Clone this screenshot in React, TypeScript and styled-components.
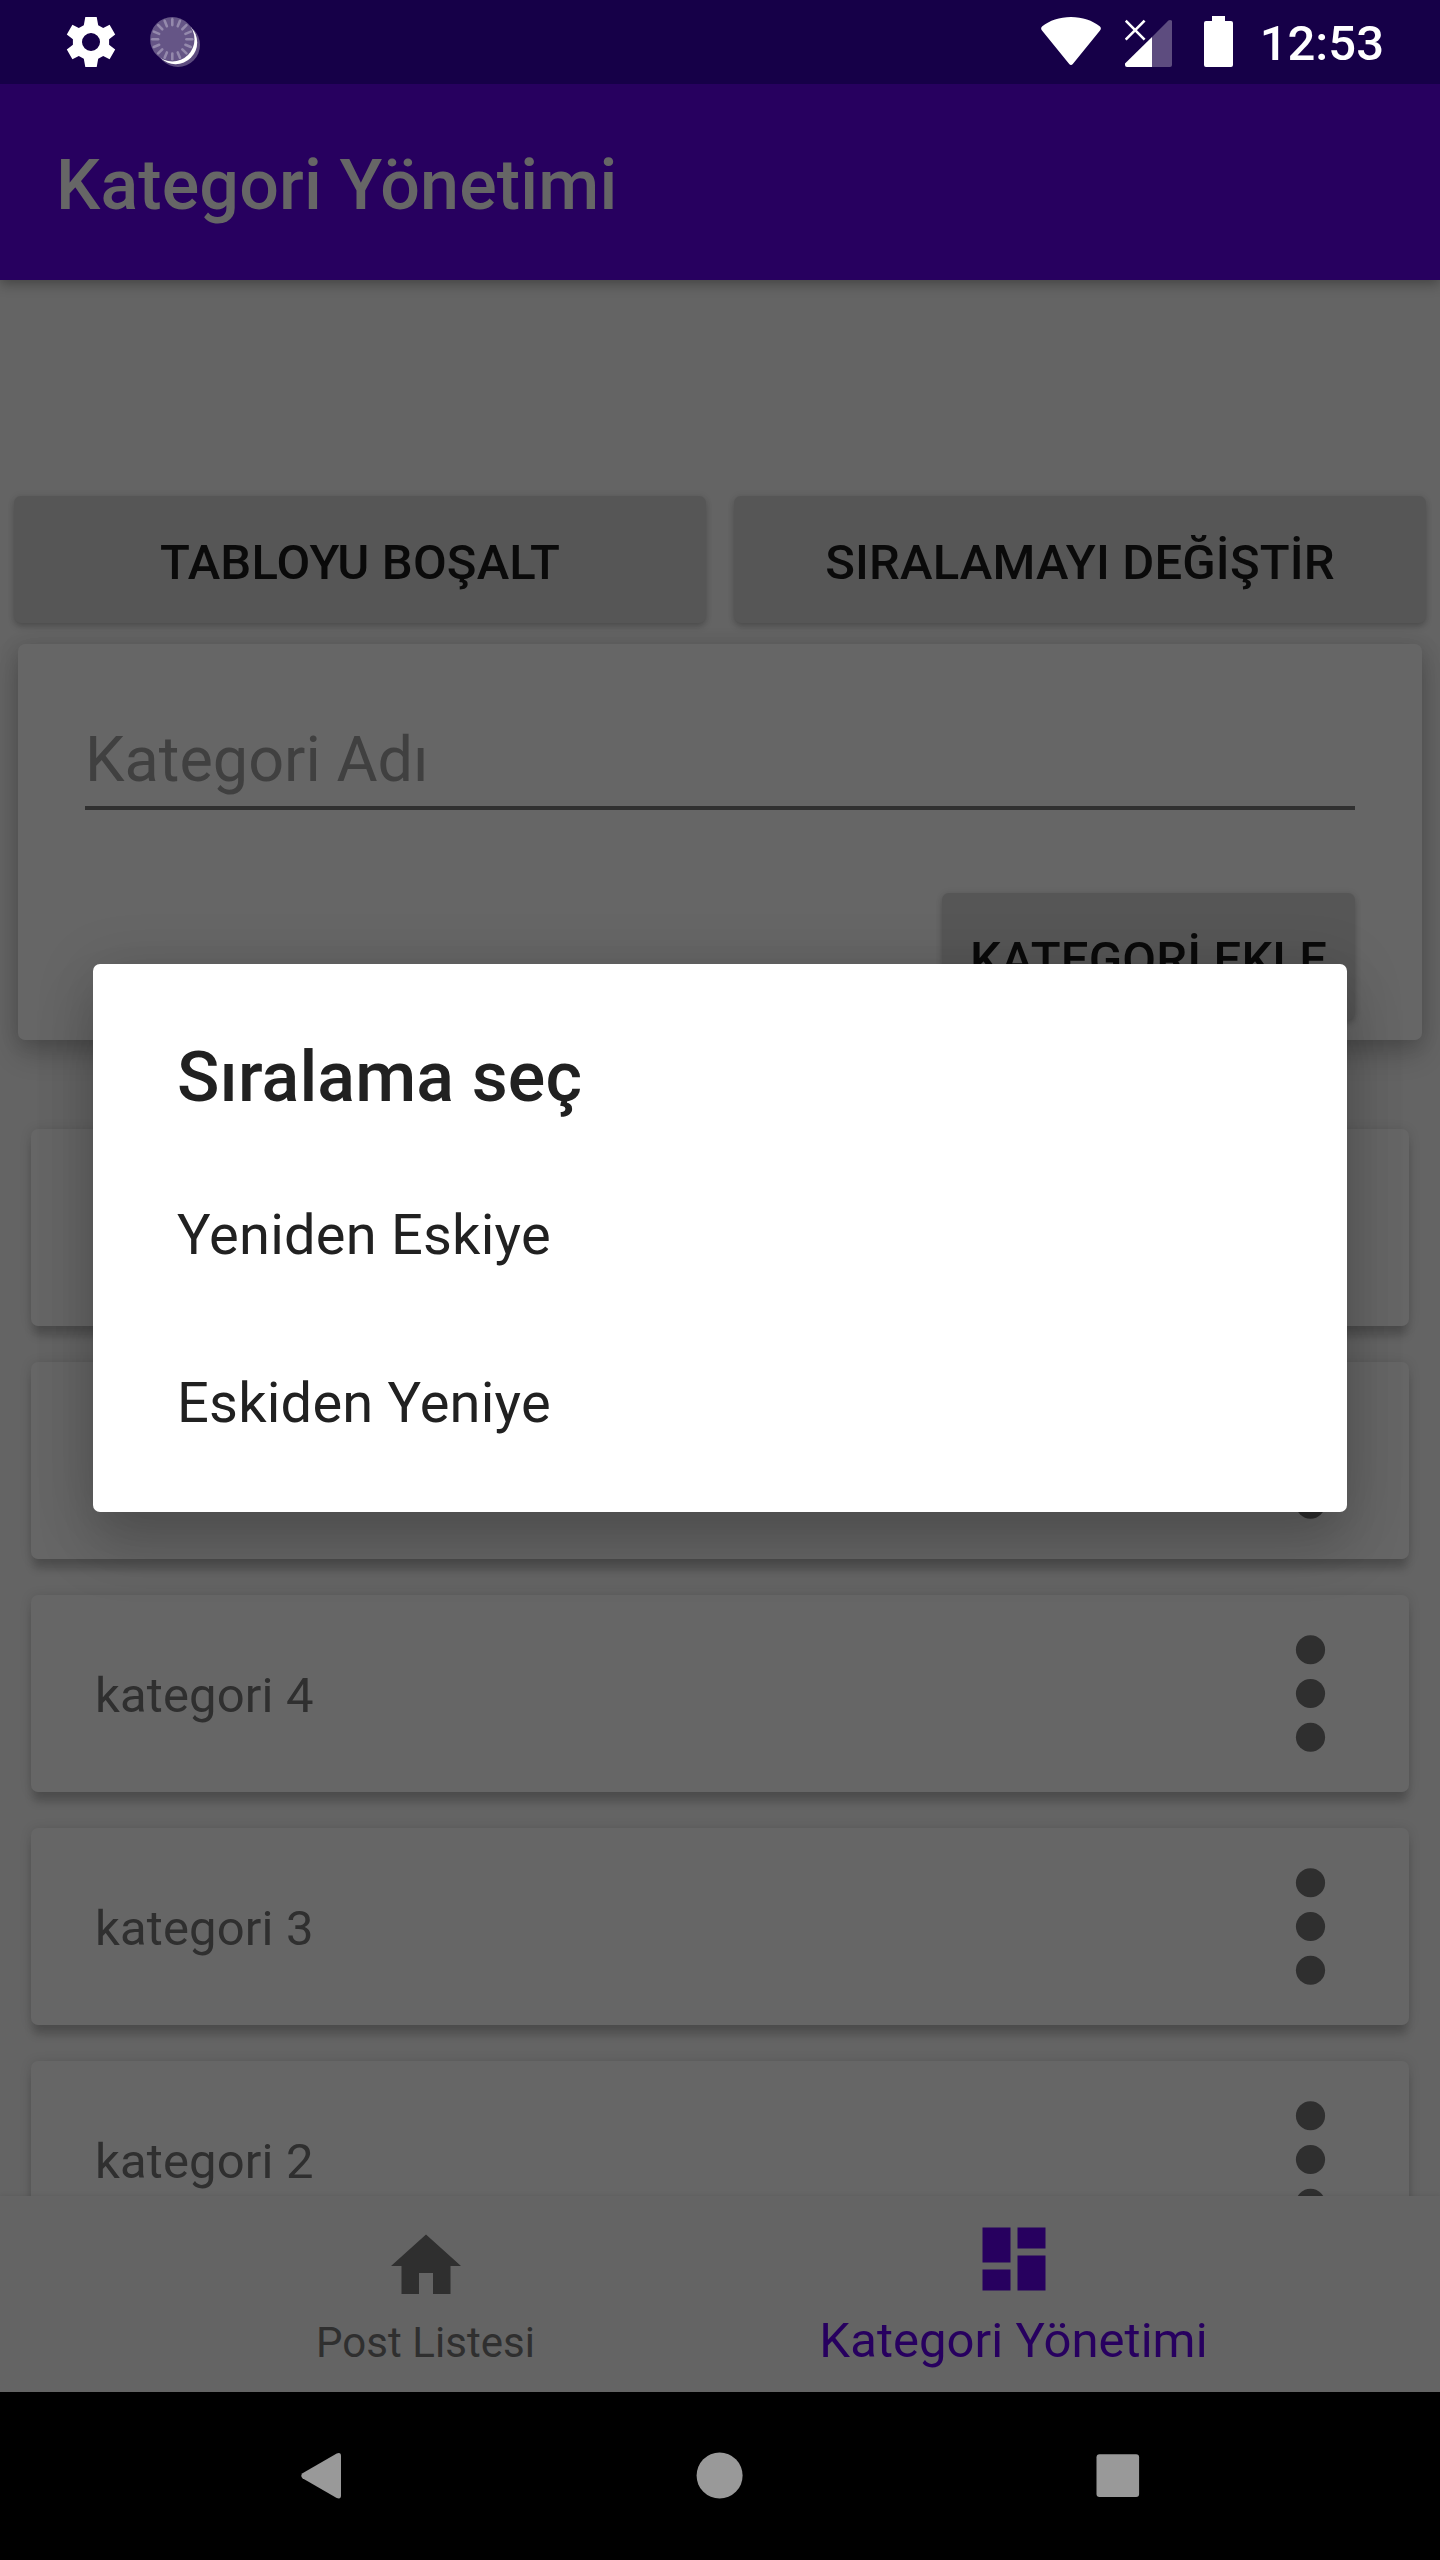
import React from "react";
import styled, { createGlobalStyle } from "styled-components";

const GlobalStyle = createGlobalStyle`
  *, *::before, *::after { box-sizing: border-box; }
  body {
    margin: 0;
    background: #000;
    font-family: Roboto, "Noto Sans", sans-serif;
  }
  button {
    border: 0;
    margin: 0;
    padding: 0;
    background: none;
    color: inherit;
    font: inherit;
  }
  svg { display: block; flex: none; }
`;

const Screen = styled.div`
  position: relative;
  width: 1440px;
  height: 2560px;
  display: flex;
  flex-direction: column;
  overflow: hidden;
  background: #646464;
`;

const StatusBar = styled.header`
  flex: none;
  height: 84px;
  padding: 0 56px 0 61px;
  display: flex;
  align-items: center;
  justify-content: space-between;
  background: #160048;
  position: relative;
  z-index: 2;
`;

const StatusGroup = styled.div<{ $gap: number }>`
  display: flex;
  align-items: center;
  gap: ${(p) => p.$gap}px;
`;

const Clock = styled.span`
  margin-left: -22px;
  padding-top: 4px;
  color: #fff;
  font-size: 49px;
  font-weight: 500;
  line-height: 58px;
`;

const AppBar = styled.div`
  flex: none;
  height: 196px;
  padding: 5px 56px 0;
  display: flex;
  align-items: center;
  background: #27005f;
  box-shadow: 0 4px 12px rgba(0, 0, 0, 0.32);
  position: relative;
  z-index: 1;
`;

const AppTitle = styled.h1`
  margin: 0;
  color: #666;
  font-size: 70px;
  font-weight: 500;
  line-height: 82px;
  letter-spacing: 0.15px;
`;

const Content = styled.main`
  flex: 1;
  min-height: 0;
  padding-top: 216px;
  display: flex;
  flex-direction: column;
  overflow: hidden;
`;

const ButtonRow = styled.div`
  flex: none;
  display: grid;
  grid-template-columns: 1fr 1fr;
  gap: 28px;
  padding: 0 14px;
`;

const RaisedButton = styled.button<{ $width?: number }>`
  width: ${(p) => (p.$width ? `${p.$width}px` : "100%")};
  height: 127px;
  padding-top: 6px;
  border-radius: 7px;
  background: #565656;
  color: #0a0a0a;
  font-size: 49px;
  font-weight: 500;
  line-height: 58px;
  letter-spacing: 0.17px;
  white-space: nowrap;
  box-shadow: 0 4px 7px -1px rgba(0, 0, 0, 0.22), 0 0 7px rgba(0, 0, 0, 0.09);
`;

const FormCard = styled.section`
  flex: none;
  height: 396px;
  margin: 21px 18px 0;
  padding: 79px 67px 0;
  display: flex;
  flex-direction: column;
  border-radius: 7px;
  background: #666;
  box-shadow: 0 14px 28px rgba(0, 0, 0, 0.2), 0 2px 20px rgba(0, 0, 0, 0.12);
`;

const Field = styled.div`
  height: 87px;
  border-bottom: 4px solid #303030;
  color: #404040;
  font-size: 63px;
  line-height: 74px;
`;

const FormActions = styled.div`
  display: flex;
  justify-content: flex-end;
  margin-top: 83px;
`;

const CategoryList = styled.div`
  display: flex;
  flex-direction: column;
  gap: 36px;
  margin-top: 89px;
  padding: 0 31px;
`;

const CategoryRow = styled.article`
  flex: none;
  height: 197px;
  padding: 0 11px 0 64px;
  display: flex;
  align-items: center;
  justify-content: space-between;
  border-radius: 7px;
  background: #666;
  box-shadow: 0 12px 8px -2px rgba(0, 0, 0, 0.18), 0 1px 12px rgba(0, 0, 0, 0.13);
`;

const CategoryName = styled.span`
  padding-top: 5px;
  color: #2f2f2f;
  font-size: 49px;
  line-height: 58px;
  letter-spacing: 0.15px;
`;

const BottomNav = styled.nav`
  flex: none;
  height: 196px;
  padding-right: 1px;
  display: flex;
  justify-content: center;
  background: #646464;
  box-shadow: 0 0 5px rgba(0, 0, 0, 0.1);
  position: relative;
`;

const NavItem = styled.button<{ $active?: boolean }>`
  width: 588px;
  padding: ${(p) => (p.$active ? "21px 0 22px" : "28px 0 24px")};
  display: flex;
  flex-direction: column;
  align-items: center;
  justify-content: space-between;
  color: ${(p) => (p.$active ? "#27005f" : "#2f2f2f")};
  font-size: ${(p) => (p.$active ? 49 : 42)}px;
  line-height: ${(p) => (p.$active ? 58 : 50)}px;
  letter-spacing: 0.06px;
`;

const SystemNav = styled.footer`
  flex: none;
  height: 168px;
  padding: 0 123px;
  display: grid;
  grid-template-columns: repeat(3, 1fr);
  place-items: center;
  background: #000;
`;

const Dialog = styled.div`
  position: absolute;
  z-index: 3;
  left: 93px;
  top: 964px;
  width: 1254px;
  height: 548px;
  border-radius: 7px;
  background: #fff;
  color: #212121;
  box-shadow: 0 36px 56px rgba(0, 0, 0, 0.17), 0 6px 60px rgba(0, 0, 0, 0.15);
`;

const DialogTitle = styled.h2`
  margin: 0;
  height: 187px;
  padding: 72px 84px 0;
  font-size: 70px;
  font-weight: 500;
  line-height: 82px;
  letter-spacing: 0.12px;
`;

const DialogOption = styled.button`
  width: 100%;
  height: 168px;
  padding: 0 84px;
  display: flex;
  align-items: center;
  font-size: 56px;
  line-height: 66px;
  letter-spacing: 0.22px;
`;

const GearIcon = () => (
  <svg width="60" height="60" viewBox="61 12 60 60" fill="#fff">
    <path
      fillRule="evenodd"
      d="M85.3 17h11.4l1.5 8.2 5 2.9 6.4-3.4 5.6 9.700-6.100 4.900v5.400l6.100 4.900-5.600 9.700-6.400-3.400-5 2.900-1.500 8.200H85.300l-1.500-8.200-5-2.900-6.400 3.400-5.600-9.700 6.100-4.900v-5.400l-6.100-4.900 5.600-9.700 6.400 3.400 5-2.900zM91 33a9 9 0 1 0 0 18a9 9 0 1 0 0-18z"
    />
  </svg>
);

const TICKS = Array.from({ length: 16 }, (_, i) => i * 22.5);

const DialIcon = () => (
  <svg width="54" height="60" viewBox="149 12 54 60">
    <circle cx="178" cy="45" r="22" fill="#5d4c7f" />
    <circle cx="175.6" cy="42.6" r="21.6" fill="#fff" />
    <circle cx="172.3" cy="39.3" r="22.2" fill="#655586" />
    {TICKS.map((angle) => (
      <path
        key={angle}
        d="M172.3 19.3v5.8"
        stroke="#9489ac"
        strokeWidth="2.6"
        strokeLinecap="round"
        transform={`rotate(${angle} 172.3 39.3)`}
      />
    ))}
  </svg>
);

const WifiIcon = () => (
  <svg width="60" height="60" viewBox="1040 12 60 60" fill="#fff">
    <path d="M1041 30.5C1039.8 29.2 1039.8 27.4 1041.3 26.3C1048.5 20.5 1058.5 17 1070 17S1091.5 20.5 1098.7 26.3C1100.2 27.4 1100.2 29.2 1099 30.5L1071.8 64.1C1070.8 65.3 1069.2 65.3 1068.2 64.1z" />
  </svg>
);

const SignalIcon = () => (
  <svg width="55" height="60" viewBox="1124 12 55 60">
    <path d="M1151 37L1167.4 20.6Q1169 19.3 1171 20.8V65Q1171 67 1169 67H1151z" fill="#5d4c7f" />
    <path d="M1151 37V67H1126Q1124 67 1124 65V63.5z" fill="#fff" />
    <path d="M1124.7 20.7L1143.6 39.6M1143.6 20.7L1124.7 39.6" stroke="#fff" strokeWidth="2.6" />
  </svg>
);

const BatteryIcon = () => (
  <svg width="54" height="60" viewBox="1203 12 54 60" fill="#fff">
    <path d="M1211 16h13v5h6q2 0 2 2v42q0 2-2 2h-25q-2 0-2-2V23q0-2 2-2h6z" />
  </svg>
);

const MoreIcon = () => (
  <svg width="175" height="175" viewBox="0 0 24 24" fill="#2f2f2f">
    <circle cx="12" cy="6" r="2" />
    <circle cx="12" cy="12" r="2" />
    <circle cx="12" cy="18" r="2" />
  </svg>
);

const HomeIcon = () => (
  <svg width="84" height="84" viewBox="0 0 24 24" fill="currentColor">
    <path d="M10 20v-6h4v6h5v-8h3L12 3 2 12h3v8z" />
  </svg>
);

const DashboardIcon = () => (
  <svg width="84" height="84" viewBox="0 0 24 24" fill="currentColor">
    <path d="M3 13h8V3H3v10zm0 8h8v-6H3v6zm10 0h8V11h-8v10zm0-18v6h8V3h-8z" />
  </svg>
);

const BackIcon = () => (
  <svg width="84" height="84" viewBox="280 2434 84 84" fill="#999">
    <path d="M302.5 2473.2L336.7 2453.5Q341 2451.8 341 2456V2495.5Q341 2499.7 336.7 2498L302.5 2478.3Q300 2475.8 302.5 2473.2z" />
  </svg>
);

const HomeCircleIcon = () => (
  <svg width="84" height="84" viewBox="0 0 84 84" fill="#999">
    <circle cx="41.6" cy="41.6" r="23" />
  </svg>
);

const RecentsIcon = () => (
  <svg width="84" height="84" viewBox="0 0 84 84" fill="#999">
    <rect x="20.5" y="20.3" width="42.6" height="42.6" rx="3" />
  </svg>
);

const categories = ["", "", "kategori 4", "kategori 3", "kategori 2"];
const sortOptions = ["Yeniden Eskiye", "Eskiden Yeniye"];

export default function App() {
  return (
    <>
      <GlobalStyle />
      <Screen lang="tr">
        <StatusBar>
          <StatusGroup $gap={28}>
            <GearIcon />
            <DialIcon />
          </StatusGroup>
          <StatusGroup $gap={24}>
            <WifiIcon />
            <SignalIcon />
            <BatteryIcon />
            <Clock>12:53</Clock>
          </StatusGroup>
        </StatusBar>
        <AppBar>
          <AppTitle>Kategori Yönetimi</AppTitle>
        </AppBar>
        <Content>
          <ButtonRow>
            <RaisedButton>TABLOYU BOŞALT</RaisedButton>
            <RaisedButton>SIRALAMAYI DEĞİŞTİR</RaisedButton>
          </ButtonRow>
          <FormCard>
            <Field>Kategori Adı</Field>
            <FormActions>
              <RaisedButton $width={413}>KATEGORİ EKLE</RaisedButton>
            </FormActions>
          </FormCard>
          <CategoryList>
            {categories.map((name, i) => (
              <CategoryRow key={i}>
                <CategoryName>{name}</CategoryName>
                <MoreIcon />
              </CategoryRow>
            ))}
          </CategoryList>
        </Content>
        <BottomNav>
          <NavItem>
            <HomeIcon />
            Post Listesi
          </NavItem>
          <NavItem $active>
            <DashboardIcon />
            Kategori Yönetimi
          </NavItem>
        </BottomNav>
        <SystemNav>
          <BackIcon />
          <HomeCircleIcon />
          <RecentsIcon />
        </SystemNav>
        <Dialog role="dialog">
          <DialogTitle>Sıralama seç</DialogTitle>
          {sortOptions.map((option) => (
            <DialogOption key={option}>{option}</DialogOption>
          ))}
        </Dialog>
      </Screen>
    </>
  );
}
